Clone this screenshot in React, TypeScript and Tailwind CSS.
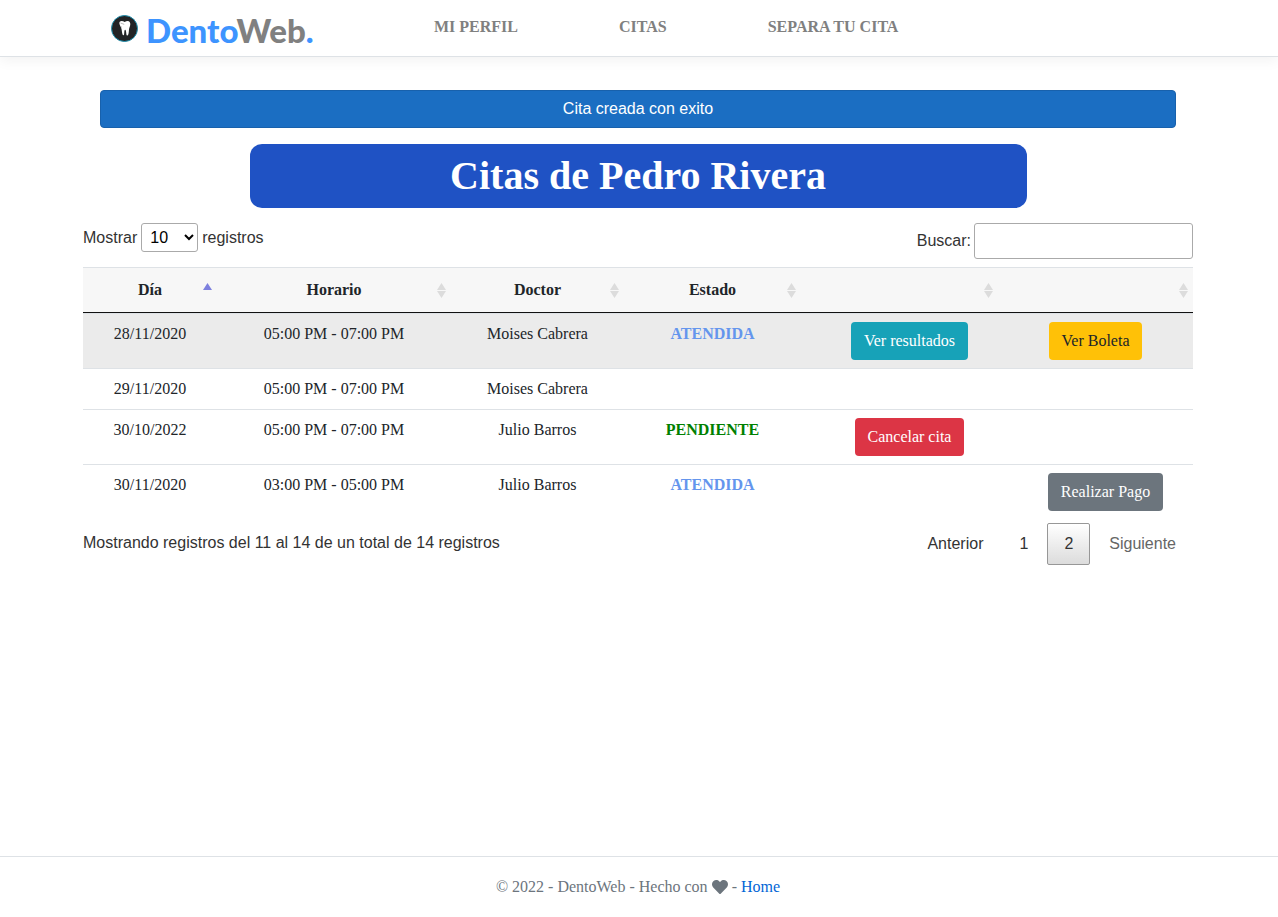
import { useState } from "react";
import { FaHeart } from "react-icons/fa";

type Action = { label: string; style: string; indent?: boolean };

type Appointment = {
  day: string;
  time: string;
  doctor: string;
  status?: "ATENDIDA" | "PENDIENTE";
  primary?: Action;
  billing?: Action;
};

const appointments: Appointment[] = [
  {
    day: "28/11/2020",
    time: "05:00 PM - 07:00 PM",
    doctor: "Moises Cabrera",
    status: "ATENDIDA",
    primary: { label: "Ver resultados", style: "bg-[#17a2b8] text-white", indent: true },
    billing: { label: "Ver Boleta", style: "bg-[#ffc107] text-[#212529]" },
  },
  { day: "29/11/2020", time: "05:00 PM - 07:00 PM", doctor: "Moises Cabrera" },
  {
    day: "30/10/2022",
    time: "05:00 PM - 07:00 PM",
    doctor: "Julio Barros",
    status: "PENDIENTE",
    primary: { label: "Cancelar cita", style: "bg-[#dc3545] text-white", indent: true },
  },
  {
    day: "30/11/2020",
    time: "03:00 PM - 05:00 PM",
    doctor: "Julio Barros",
    status: "ATENDIDA",
    billing: { label: "Realizar Pago", style: "bg-[#6c757d] text-white", indent: true },
  },
];

const columns = ["Día", "Horario", "Doctor", "Estado", "", ""];

const navLinks = ["MI PERFIL", "CITAS", "SEPARA TU CITA"];

function ToothLogo() {
  return (
    <svg viewBox="0 0 28 28" className="size-7" aria-hidden="true">
      <circle cx="13.500" cy="14.500" r="13" fill="#222426" stroke="#1d8fae" strokeWidth="1" />
      <path
        d="M8.500 8C10 6.300 12 7.200 13.700 7.900c1.500-.8 3.900-1.500 5 .1 1.200 1.900.4 4.300-.4 6-.5 1.600-.3 3.900-.8 5.700-.3 1.200-.9 2-1.600 1.700-.8-.5-.5-3.400-1.100-5-.3-.9-1-.9-1.300 0-.4 1.600-.1 4.400-.8 4.900-.9.300-1.400-1.300-1.600-2.500-.3-1.800-.3-3.600-1-5.100-.9-1.900-2.200-3.900-1.600-5.700Z"
        fill="#fff"
      />
      <path d="M9.500 9c1 .1 2.300 1 3.700 1.400M9.500 12.500l1.500.8" stroke="#8b8b8b" strokeWidth=".6" fill="none" />
    </svg>
  );
}

function SortIcon({ ascending }: { ascending: boolean }) {
  return (
    <svg viewBox="0 0 9 15" className="absolute top-[15px] right-[5px] h-[15px] w-[9px]" aria-hidden="true">
      <path d="M4.500 0 9 7H0Z" fill={ascending ? "#7d80de" : "#dcdcdc"} />
      {!ascending && <path d="M0 8h9l-4.500 7Z" fill="#dcdcdc" />}
    </svg>
  );
}

function ActionCell({ action }: { action?: Action }) {
  return (
    <td className={action?.indent ? "border-t border-[#dee2e6] py-2 pr-0 pl-5" : "border-t border-[#dee2e6] py-2"}>
      {action && (
        <button type="button" className={`h-[38px] rounded px-[13px] align-top whitespace-nowrap ${action.style}`}>
          {action.label}
        </button>
      )}
    </td>
  );
}

export default function App() {
  const [pageSize, setPageSize] = useState("10");
  const [query, setQuery] = useState("");

  return (
    <div className="flex min-h-screen flex-col bg-white font-['Liberation_Serif',serif] text-base text-[#212529]">
      <header className="border-b border-[#dee2e6] bg-white pr-0.5 shadow-[0_4px_12px_rgba(0,0,0,0.05)]">
        <div className="mx-auto flex h-14 max-w-[1110px] items-center px-7">
          <a
            href="#"
            className="flex w-[203px] items-center gap-[7px] font-['Lato',sans-serif] text-[33px] leading-none font-black text-[#3d94ff]"
          >
            <ToothLogo />
            <span className="mt-1">
              Dento<span className="text-[#808080]">Web</span>.
            </span>
          </a>
          <nav className="ml-[120px] flex gap-[101px] pb-0.5 font-bold text-[#808080]">
            {navLinks.map((link) => (
              <a key={link} href="#">
                {link}
              </a>
            ))}
          </nav>
        </div>
      </header>

      <main className="pr-0.5">
        <div className="mx-auto max-w-[1110px] pt-[33px] font-['Liberation_Sans',sans-serif] text-[#333]">
          <div
            role="alert"
            className="mx-[17px] flex h-[38px] items-center justify-center rounded border border-[#1861ac] bg-[#1b6ec2] text-white"
          >
            Cita creada con exito
          </div>

          <h1 className="mx-auto mt-4 flex h-16 w-[70%] items-center justify-center rounded-xl bg-[#1f52c4] font-['Liberation_Serif',serif] text-[40px] font-bold text-white">
            Citas de Pedro Rivera
          </h1>

          <div className="mt-[15px] flex items-start justify-between">
            <label className="flex items-center gap-1">
              Mostrar
              <select
                value={pageSize}
                onChange={(event) => setPageSize(event.target.value)}
                className="h-[29px] w-[57px] rounded-[3px] border border-[#aaa] bg-transparent p-1 text-black"
              >
                <option>10</option>
                <option>25</option>
                <option>50</option>
                <option>100</option>
              </select>
              registros
            </label>
            <label className="flex items-center gap-[3px]">
              Buscar:
              <input
                type="search"
                value={query}
                onChange={(event) => setQuery(event.target.value)}
                className="h-9 w-[219px] rounded-[3px] border border-[#aaa] bg-transparent px-1"
              />
            </label>
          </div>

          <table className="mt-2 w-full table-fixed border-separate border-spacing-0 text-center font-['Liberation_Serif',serif] text-[#212529]">
            <colgroup>
              <col className="w-[134px]" />
              <col className="w-[234px]" />
              <col className="w-[173px]" />
              <col className="w-[177px]" />
              <col className="w-[197px]" />
              <col className="w-[195px]" />
            </colgroup>
            <thead>
              <tr className="bg-[#f7f7f7]">
                {columns.map((column, index) => (
                  <th
                    key={index}
                    className="relative h-[46px] border-t border-b border-t-[#dee2e6] border-b-[#111] p-0 font-bold"
                  >
                    {column}
                    <SortIcon ascending={index === 0} />
                  </th>
                ))}
              </tr>
            </thead>
            <tbody className="align-top">
              {appointments.map((item) => (
                <tr key={item.day} className="first:bg-[#ebebeb]">
                  <td className="border-t border-[#dee2e6] py-2">{item.day}</td>
                  <td className="border-t border-[#dee2e6] py-2">{item.time}</td>
                  <td className="border-t border-[#dee2e6] py-2">{item.doctor}</td>
                  <td className="border-t border-[#dee2e6] py-2 font-bold">
                    <span className={item.status === "PENDIENTE" ? "text-[#008000]" : "text-[#6495ed]"}>
                      {item.status}
                    </span>
                  </td>
                  <ActionCell action={item.primary} />
                  <ActionCell action={item.billing} />
                </tr>
              ))}
            </tbody>
          </table>

          <div className="mt-1 flex items-start justify-between">
            <p className="pt-2">Mostrando registros del 11 al 14 de un total de 14 registros</p>
            <nav aria-label="Paginación" className="flex gap-0.5">
              <button type="button" className="h-[42px] px-[17px]">
                Anterior
              </button>
              <button type="button" className="h-[42px] px-[17px]">
                1
              </button>
              <button
                type="button"
                aria-current="page"
                className="h-[42px] rounded-[2px] border border-[#979797] bg-linear-to-b from-white to-[#dcdcdc] px-4"
              >
                2
              </button>
              <button type="button" disabled className="h-[42px] px-[17px] text-[#666]">
                Siguiente
              </button>
            </nav>
          </div>
        </div>
      </main>

      <footer className="mt-auto border-t border-[#dee2e6] pr-0.5 text-[#6c757d]">
        <div className="flex h-[60px] items-center justify-center gap-1">
          <span>© 2022 - DentoWeb - Hecho con</span>
          <FaHeart aria-label="amor" />
          <span>
            -{" "}
            <a href="#" className="text-[#0366d6]">
              Home
            </a>
          </span>
        </div>
      </footer>
    </div>
  );
}
